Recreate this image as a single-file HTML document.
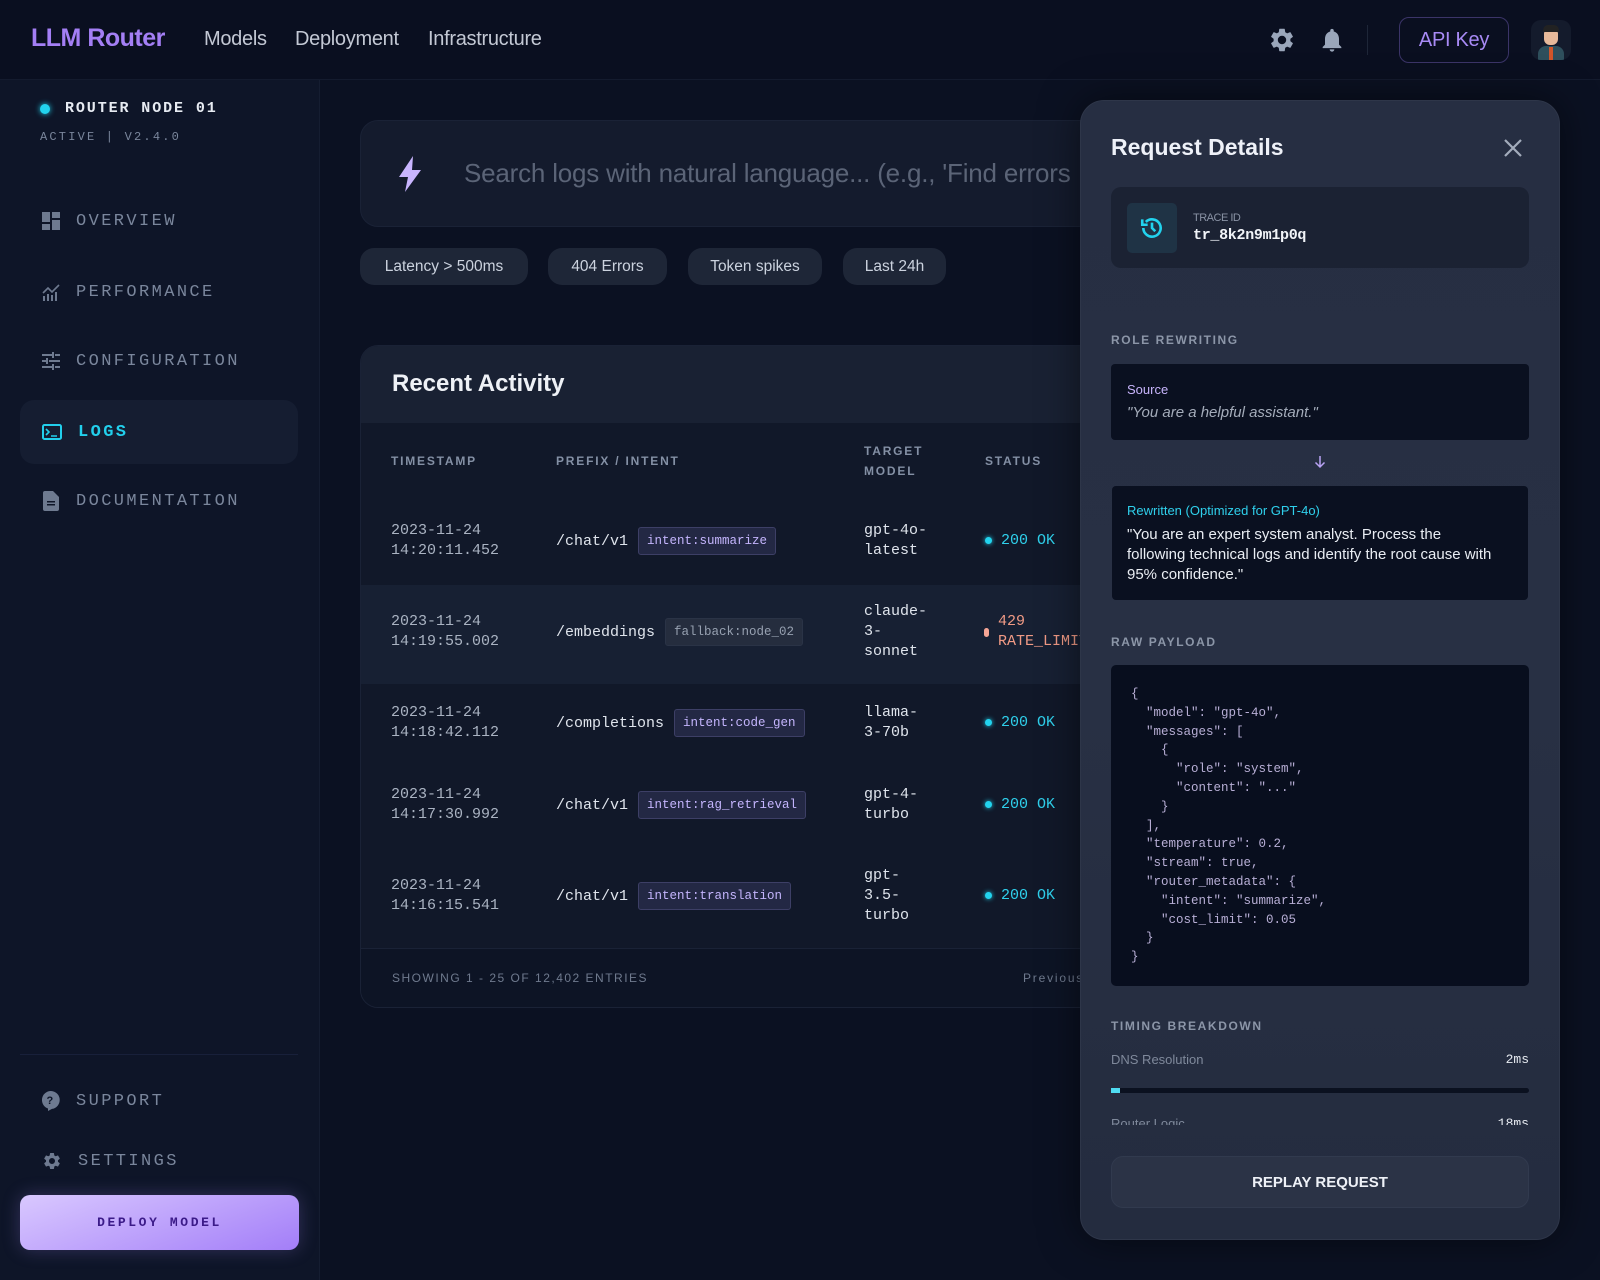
<!DOCTYPE html>
<html><head><meta charset="utf-8"><style>
*{box-sizing:border-box;margin:0;padding:0}
body{width:1600px;height:1280px;overflow:hidden;background:#0b1122;font-family:"Liberation Sans",sans-serif;color:#e2e8f0;position:relative}
.abs{position:absolute}
.mono{font-family:"Liberation Mono","DejaVu Sans Mono",monospace}
header{position:absolute;left:0;top:0;width:1600px;height:80px;background:#0a0f20;border-bottom:1px solid #141b2e}
.logo{left:31px;top:24px;font-size:25px;font-weight:bold;color:#a47ff5;letter-spacing:-0.5px}
.nav{top:28px;font-size:20px;color:#c3c8d4;letter-spacing:-0.3px}
aside{position:absolute;left:0;top:80px;width:320px;height:1200px;background:#0e1528;border-right:1px solid #151d31}
.item{position:absolute;left:20px;width:278px;height:64px;display:flex;align-items:center;padding-left:22px;font-size:17px;letter-spacing:2.4px;color:#7a869c}
.item svg{margin-right:16px}
.chip{position:absolute;top:248px;height:37px;border-radius:14px;background:#1e2637;color:#cbd2de;font-size:15.5px;display:flex;align-items:center;justify-content:center}
.th{position:absolute;font-size:12px;letter-spacing:1.8px;color:#8490a5;font-weight:bold;line-height:20px}
.td{position:absolute;font-size:15px;line-height:20px;color:#aab3c2}
.pf{position:absolute;display:flex;align-items:center;height:40px;font-size:15px;color:#dfe4ec}
.tag{display:inline-block;border:1px solid #3d3f66;background:#232844;color:#c4b5fd;font-size:12.5px;line-height:16px;padding:5px 8px;border-radius:3px;margin-left:10px}
.ok{color:#2fd0ec}
.dot{display:inline-block;width:7px;height:7px;border-radius:50%;background:#22d3ee;margin-right:9px;vertical-align:middle;box-shadow:0 0 5px #22d3ee}
.lbl{position:absolute;left:1111px;font-size:12px;letter-spacing:1.6px;font-weight:bold;color:#8c96a8}
</style></head><body>
<header>
<div class="abs logo">LLM Router</div>
<div class="abs nav" style="left:204px">Models</div>
<div class="abs nav" style="left:295px">Deployment</div>
<div class="abs nav" style="left:428px">Infrastructure</div>
<svg class="abs" style="left:1268px;top:26px" width="28" height="28" viewBox="0 0 24 24"><path fill="#9aa6ba" d="M19.14 12.94c.04-.3.06-.61.06-.94s-.02-.64-.07-.94l2.030-1.58a.49.49 0 0 0 .12-.61l-1.92-3.32a.49.49 0 0 0-.59-.22l-2.39.96c-.5-.38-1.03-.7-1.62-.94l-.36-2.54a.48.48 0 0 0-.48-.41h-3.84a.48.48 0 0 0-.47.41l-.36 2.54c-.59.24-1.13.57-1.620.94l-2.39-.96a.48.48 0 0 0-.59.22L2.74 8.87a.47.47 0 0 0 .12.61l2.03 1.58c-.05.3-.09.63-.09.94s.02.64.07.94l-2.03 1.58a.49.49 0 0 0-.12.61l1.92 3.32c.12.22.37.29.59.22l2.39-.96c.5.38 1.03.7 1.62.94l.36 2.54c.05.24.24.41.48.41h3.84c.24 0 .44-.17.47-.41l.36-2.54c.59-.24 1.13-.56 1.62-.94l2.39.96c.22.08.47 0 .59-.22l1.92-3.32a.47.47 0 0 0-.12-.61l-2.01-1.58zM12 15.6A3.6 3.6 0 1 1 12 8.4a3.6 3.6 0 0 1 0 7.2z"/></svg>
<svg class="abs" style="left:1318px;top:25px" width="28" height="30" viewBox="0 0 24 24"><path fill="#9aa6ba" d="M12 22c1.1 0 2-.9 2-2h-4a2 2 0 0 0 2 2zm6-6v-5c0-3.07-1.64-5.64-4.5-6.32V4a1.5 1.5 0 0 0-3 0v.68C7.63 5.36 6 7.92 6 11v5l-2 2v1h16v-1l-2-2z"/></svg>
<div class="abs" style="left:1367px;top:25px;width:1px;height:30px;background:#1e2638"></div>
<div class="abs" style="left:1399px;top:17px;width:110px;height:46px;border:1.5px solid #3b3468;border-radius:10px;color:#a88af5;font-size:20px;display:flex;align-items:center;justify-content:center;letter-spacing:-0.3px">API Key</div>
<div class="abs" style="left:1531px;top:20px;width:40px;height:40px;border-radius:10px;background:#141b2c;overflow:hidden">
<div class="abs" style="left:7px;top:26px;width:26px;height:16px;border-radius:8px 8px 0 0;background:#2e4f5c"></div>
<div class="abs" style="left:18px;top:27px;width:4px;height:13px;background:#d0552a"></div>
<div class="abs" style="left:13px;top:8px;width:14px;height:17px;border-radius:6px;background:#e7b99a"></div>
<div class="abs" style="left:12px;top:5px;width:16px;height:7px;border-radius:6px 6px 2px 2px;background:#222"></div>
</div>
</header>

<aside>
<div class="abs" style="left:40px;top:24px;width:10px;height:10px;border-radius:50%;background:#22d3ee;box-shadow:0 0 6px #22d3ee"></div>
<div class="abs mono" style="left:65px;top:20px;font-size:15px;font-weight:bold;letter-spacing:1.9px;color:#e7ebf2">ROUTER NODE 01</div>
<div class="abs mono" style="left:40px;top:50px;font-size:12px;letter-spacing:2.2px;color:#7a869c">ACTIVE | V2.4.0</div>

<div class="item mono" style="top:109px"><svg width="18" height="18" viewBox="0 0 18 18"><path fill="#6e7a90" d="M0 0h8v10H0zM10 0h8v6h-8zM10 8h8v10h-8zM0 12h8v6H0z"/></svg>OVERVIEW</div>
<div class="item mono" style="top:180px"><svg width="18" height="18" viewBox="0 0 18 18"><path fill="none" stroke="#6e7a90" stroke-width="1.6" d="M1 10l5-5 4 4 7-7"/><path fill="#6e7a90" d="M1 13h2v5H1zM5 11h2v7H5zM9 12h2v6H9zM13 9h2v9h-2z"/></svg>PERFORMANCE</div>
<div class="item mono" style="top:249px"><svg width="18" height="18" viewBox="0 0 18 18"><path fill="#6e7a90" d="M0 2h10v2H0zM13 2h5v2h-5zM10 0h2v6h-2zM0 8h4v2H0zM7 8h11v2H7zM4 6h2v6H4zM0 14h10v2H0zM13 14h5v2h-5zM10 12h2v6h-2z"/></svg>CONFIGURATION</div>
<div class="item mono" style="top:320px;background:#151d31;border-radius:14px;color:#22cfec;font-weight:bold"><svg width="20" height="16" viewBox="0 0 20 16"><rect x="1" y="1" width="18" height="14" rx="1.5" fill="none" stroke="#22cfec" stroke-width="2"/><path d="M4 5l3 3-3 3M9 12h6" fill="none" stroke="#22cfec" stroke-width="1.6"/></svg>LOGS</div>
<div class="item mono" style="top:389px"><svg width="18" height="20" viewBox="0 0 16 20"><path fill="#6e7a90" d="M2 0h8l6 6v12a2 2 0 0 1-2 2H2a2 2 0 0 1-2-2V2a2 2 0 0 1 2-2z"/><path fill="#0e1528" d="M4 10h8v1.5H4zM4 13h8v1.5H4z"/></svg>DOCUMENTATION</div>

<div class="abs" style="left:20px;top:974px;width:278px;height:1px;background:#18203a"></div>
<div class="item mono" style="top:989px"><svg width="18" height="20" viewBox="0 0 18 20"><path fill="#6e7a90" d="M9 0a9 9 0 0 1 1 17.9L6 20v-2.5A9 9 0 0 1 9 0z"/><text x="9" y="13" font-size="11" font-weight="bold" text-anchor="middle" fill="#0e1528" font-family="Liberation Sans">?</text></svg>SUPPORT</div>
<div class="item mono" style="top:1049px"><svg width="20" height="20" viewBox="0 0 24 24"><path fill="#6e7a90" d="M19.14 12.94c.04-.3.06-.61.06-.94s-.02-.64-.07-.94l2.03-1.58a.49.49 0 0 0 .12-.61l-1.92-3.32a.49.49 0 0 0-.59-.22l-2.39.96c-.5-.38-1.03-.7-1.62-.94l-.36-2.54a.48.48 0 0 0-.48-.41h-3.84a.48.48 0 0 0-.47.41l-.36 2.54c-.59.24-1.13.57-1.62.94l-2.39-.96a.48.48 0 0 0-.59.22L2.74 8.87a.47.47 0 0 0 .12.61l2.03 1.58c-.05.3-.09.63-.09.94s.02.64.07.94l-2.03 1.58a.49.49 0 0 0-.12.61l1.92 3.32c.12.22.37.29.59.22l2.39-.96c.5.38 1.03.7 1.62.94l.36 2.54c.05.24.24.41.48.41h3.84c.24 0 .44-.17.47-.41l.36-2.54c.59-.24 1.13-.56 1.62-.94l2.39.96c.22.08.47 0 .59-.22l1.92-3.32a.47.47 0 0 0-.12-.61l-2.01-1.58zM12 15.6A3.6 3.6 0 1 1 12 8.4a3.6 3.6 0 0 1 0 7.2z"/></svg>SETTINGS</div>
<div class="abs mono" style="left:20px;top:1115px;width:279px;height:55px;border-radius:10px;background:linear-gradient(160deg,#d9c8ff,#a37ef8);box-shadow:0 0 18px rgba(167,139,250,.25);color:#3b1a88;font-weight:bold;font-size:13px;letter-spacing:2.6px;display:flex;align-items:center;justify-content:center">DEPLOY MODEL</div>
</aside>

<!-- search -->
<div class="abs" style="left:360px;top:120px;width:760px;height:107px;background:#141b2d;border:1px solid #1a2236;border-radius:18px"></div>
<svg class="abs" style="left:397px;top:156px" width="26" height="36" viewBox="0 0 26 36"><path fill="#c9b5ff" d="M16 0L2 21h9l-3 15 16-22h-9z"/></svg>
<div class="abs" style="left:464px;top:158px;font-size:26px;color:#5b6477;white-space:nowrap;width:616px;overflow:hidden;letter-spacing:-0.2px">Search logs with natural language... (e.g., 'Find errors</div>
<div class="chip" style="left:360px;width:168px">Latency &gt; 500ms</div>
<div class="chip" style="left:548px;width:119px">404 Errors</div>
<div class="chip" style="left:688px;width:134px">Token spikes</div>
<div class="chip" style="left:843px;width:103px">Last 24h</div>

<!-- table card -->
<div class="abs" style="left:360px;top:345px;width:760px;height:663px;background:#111829;border:1px solid #1a2236;border-radius:18px;overflow:hidden">
<div class="abs" style="left:0;top:0;width:760px;height:77px;background:#192133"></div>
<div class="abs" style="left:31px;top:24px;font-size:24px;font-weight:bold;color:#eef1f6">Recent Activity</div>
<div class="abs" style="left:0;top:239px;width:760px;height:99px;background:#172033"></div>
<div class="abs" style="left:0;top:602px;width:760px;height:61px;background:#0d1425;border-top:1px solid #1a2236"></div>
<div class="abs" style="left:31px;top:625px;font-size:12px;letter-spacing:1.5px;color:#6f7a8e">SHOWING 1 - 25 OF 12,402 ENTRIES</div>
<div class="abs" style="left:662px;top:625px;font-size:12px;letter-spacing:1.8px;color:#6f7a8e">Previous</div>
</div>
<div class="th" style="left:391px;top:451px">TIMESTAMP</div>
<div class="th" style="left:556px;top:451px">PREFIX / INTENT</div>
<div class="th" style="left:864px;top:441px">TARGET<br>MODEL</div>
<div class="th" style="left:985px;top:451px">STATUS</div>

<div class="td mono" style="left:391px;top:521px">2023-11-24<br>14:20:11.452</div>
<div class="pf mono" style="left:556px;top:521px">/chat/v1<span class="tag">intent:summarize</span></div>
<div class="td mono" style="left:864px;top:521px;color:#dfe4ec">gpt-4o-<br>latest</div>
<div class="td mono ok" style="left:985px;top:531px"><span class="dot"></span>200 OK</div>

<div class="td mono" style="left:391px;top:612px">2023-11-24<br>14:19:55.002</div>
<div class="pf mono" style="left:556px;top:612px">/embeddings<span class="tag" style="background:#252d3e;border-color:#2a3346;color:#97a1b1">fallback:node_02</span></div>
<div class="td mono" style="left:864px;top:602px;color:#dfe4ec">claude-<br>3-<br>sonnet</div>
<div class="abs" style="left:984px;top:628px;width:5px;height:9px;border-radius:3px;background:#f5a595"></div>
<div class="td mono" style="left:998px;top:612px;color:#f19a85;width:82px;overflow:hidden">429<br>RATE_LIMIT</div>

<div class="td mono" style="left:391px;top:703px">2023-11-24<br>14:18:42.112</div>
<div class="pf mono" style="left:556px;top:703px">/completions<span class="tag">intent:code_gen</span></div>
<div class="td mono" style="left:864px;top:703px;color:#dfe4ec">llama-<br>3-70b</div>
<div class="td mono ok" style="left:985px;top:713px"><span class="dot"></span>200 OK</div>

<div class="td mono" style="left:391px;top:785px">2023-11-24<br>14:17:30.992</div>
<div class="pf mono" style="left:556px;top:785px">/chat/v1<span class="tag">intent:rag_retrieval</span></div>
<div class="td mono" style="left:864px;top:785px;color:#dfe4ec">gpt-4-<br>turbo</div>
<div class="td mono ok" style="left:985px;top:795px"><span class="dot"></span>200 OK</div>

<div class="td mono" style="left:391px;top:876px">2023-11-24<br>14:16:15.541</div>
<div class="pf mono" style="left:556px;top:876px">/chat/v1<span class="tag">intent:translation</span></div>
<div class="td mono" style="left:864px;top:866px;color:#dfe4ec">gpt-<br>3.5-<br>turbo</div>
<div class="td mono ok" style="left:985px;top:886px"><span class="dot"></span>200 OK</div>

<!-- panel -->
<div class="abs" style="left:1080px;top:100px;width:480px;height:1140px;border-radius:24px;background:linear-gradient(180deg,#262e42,#283044 50%,#242c3f);border:1px solid #2e3649;box-shadow:0 0 40px rgba(0,0,0,.5)"></div>
<div class="abs" style="left:1111px;top:134px;font-size:23px;font-weight:bold;color:#eef1f8">Request Details</div>
<svg class="abs" style="left:1503px;top:138px" width="20" height="20" viewBox="0 0 20 20"><path d="M2 2l16 16M18 2L2 18" stroke="#a3acbc" stroke-width="2.2"/></svg>
<div class="abs" style="left:1111px;top:187px;width:418px;height:81px;border-radius:10px;background:#1b2233"></div>
<div class="abs" style="left:1127px;top:203px;width:50px;height:50px;border-radius:5px;background:#1f3345"></div>
<svg class="abs" style="left:1139px;top:215px" width="26" height="26" viewBox="0 0 24 24"><path d="M4 12a8 8 0 1 0 2.3-5.6" fill="none" stroke="#22d3ee" stroke-width="2.4"/><path d="M3 4v5h5" fill="none" stroke="#22d3ee" stroke-width="2.4"/><path d="M12 7v5l3 3" fill="none" stroke="#22d3ee" stroke-width="2.4"/></svg>
<div class="abs" style="left:1193px;top:212px;font-size:11px;color:#8a93a5;letter-spacing:-0.5px">TRACE ID</div>
<div class="abs mono" style="left:1193px;top:227px;font-size:15px;font-weight:bold;color:#f1f4f8;letter-spacing:-0.3px">tr_8k2n9m1p0q</div>

<div class="lbl" style="top:333px">ROLE REWRITING</div>
<div class="abs" style="left:1111px;top:364px;width:418px;height:76px;border-radius:4px;background:#0a1020"></div>
<div class="abs" style="left:1127px;top:382px;font-size:13px;color:#c7b4fb">Source</div>
<div class="abs" style="left:1127px;top:404px;font-size:15px;font-style:italic;color:#a4acba">"You are a helpful assistant."</div>
<svg class="abs" style="left:1314px;top:455px" width="12" height="14" viewBox="0 0 12 14"><path d="M6 1v11M1.5 7.5L6 12l4.5-4.5" fill="none" stroke="#b9a3f5" stroke-width="1.5"/></svg>
<div class="abs" style="left:1112px;top:486px;width:416px;height:114px;border-radius:4px;background:#0a1020"></div>
<div class="abs" style="left:1127px;top:503px;font-size:13px;color:#2fd0ec">Rewritten (Optimized for GPT-4o)</div>
<div class="abs" style="left:1127px;top:525px;width:365px;font-size:15px;line-height:20px;color:#e9edf3">"You are an expert system analyst. Process the following technical logs and identify the root cause with 95% confidence."</div>

<div class="lbl" style="top:635px">RAW PAYLOAD</div>
<div class="abs" style="left:1111px;top:665px;width:418px;height:321px;border-radius:5px;background:#080e1e"></div>
<pre class="abs" style="left:1131px;top:685px;font-family:'Liberation Mono',monospace;font-size:12.5px;line-height:18.8px;color:#b8afd6">{
  "model": "gpt-4o",
  "messages": [
    {
      "role": "system",
      "content": "..."
    }
  ],
  "temperature": 0.2,
  "stream": true,
  "router_metadata": {
    "intent": "summarize",
    "cost_limit": 0.05
  }
}</pre>

<div class="lbl" style="top:1019px">TIMING BREAKDOWN</div>
<div class="abs" style="left:1111px;top:1052px;font-size:13px;color:#7f899b">DNS Resolution</div>
<div class="abs mono" style="left:1480px;top:1052px;width:49px;text-align:right;font-size:13px;color:#e6eaf0">2ms</div>
<div class="abs" style="left:1111px;top:1088px;width:418px;height:5px;border-radius:3px;background:#0b1120"></div>
<div class="abs" style="left:1111px;top:1088px;width:9px;height:5px;background:#4fdcf2"></div>
<div class="abs" style="left:1111px;top:1114px;width:418px;height:11px;overflow:hidden">
<div class="abs" style="left:0;top:2px;font-size:13px;color:#7f899b">Router Logic</div>
<div class="abs mono" style="right:0;top:2px;font-size:13px;color:#e6eaf0">18ms</div>
</div>
<div class="abs" style="left:1111px;top:1156px;width:418px;height:52px;border-radius:12px;background:#2b3346;border:1px solid #313a4e;color:#eef1f7;font-weight:bold;font-size:15px;display:flex;align-items:center;justify-content:center">REPLAY REQUEST</div>
</body></html>
